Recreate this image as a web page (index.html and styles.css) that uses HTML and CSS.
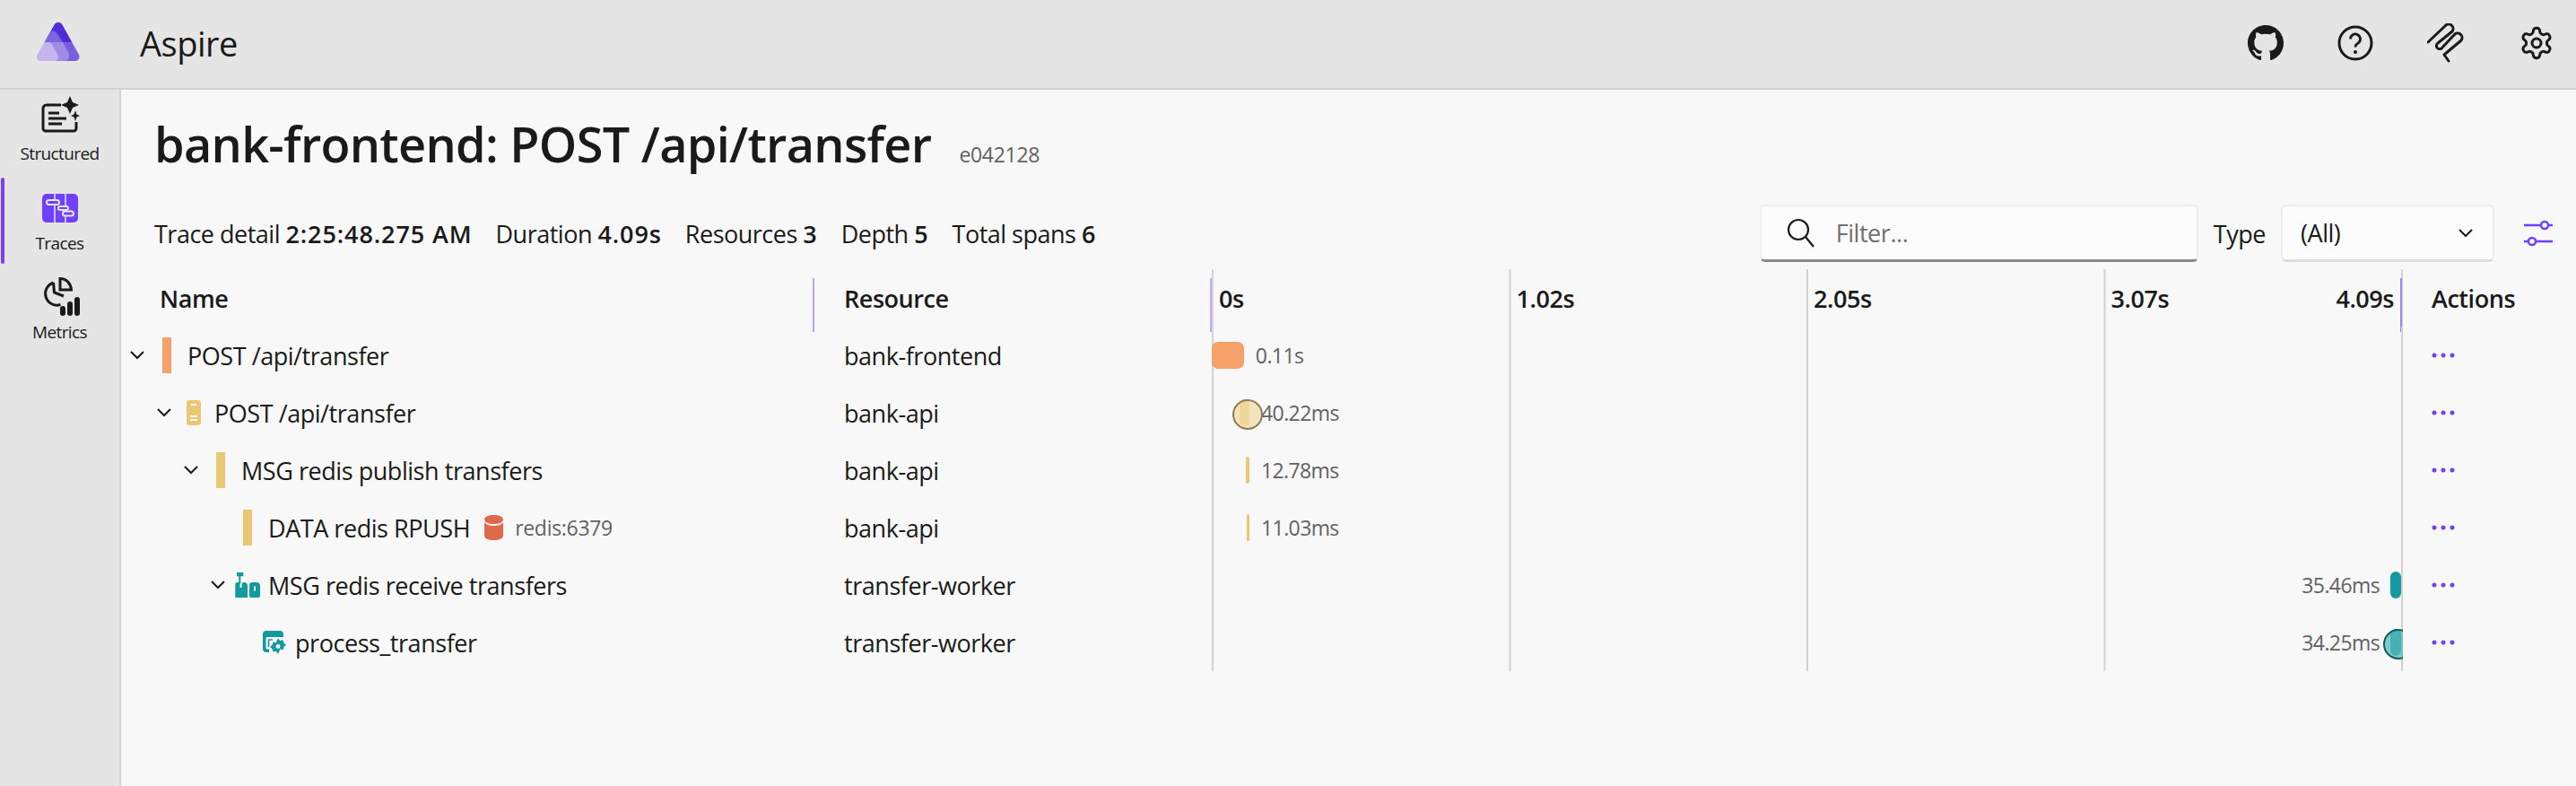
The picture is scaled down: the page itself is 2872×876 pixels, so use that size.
FILE: index.html
```html
<!DOCTYPE html>
<html lang="en">
<head>
    <meta charset="UTF-8">
    <title>Aspire</title>
    <link rel="stylesheet" href="styles.css">
</head>
<body>

    <div class="app">
        <!-- Top bar -->
        <header class="topbar">
            <div class="logo-cell">
                <svg class="logo" width="48" height="44" viewBox="0 0 48 44">
                    <path d="M24 0c2 0 3.5 1 4.6 3L47 36c1.5 3.300-.5 7-4 7H5c-3.500 0-5.500-3.700-4-7L19.400 3C20.500 1 22 0 24 0z" fill="#7a5fdc"/>
                    <path d="M24 0c2 0 3.5 1 4.600 3L39 22H9L19.400 3C20.500 1 22 0 24 0z" fill="#512bd4"/>
                    <path d="M15.500 10.500C17 9 20 9 22 11l7 11H9z" fill="#7f63e2"/>
                    <path d="M9 22h20l6.500 12c1.500 4-.5 9-4 9H10z" fill="#a08be8"/>
                    <path d="M11 22c-1 0-2 0-3 1L1 36c-1.500 3.300.5 7 4 7h15c3 0 5-4 3.500-7L17 25c-1.500-2.500-3.500-3-6-3z" fill="#c4b5f0"/>
                </svg>
            </div>
            <div class="app-name">Aspire</div>
            <div class="top-actions">
                <svg class="top-icon" width="40" height="40" viewBox="0 0 16 16" fill="#1a1a1a"><path d="M8 0C3.580 0 0 3.580 0 8c0 3.540 2.290 6.530 5.470 7.590.4.070.55-.17.55-.38 0-.19-.01-.82-.01-1.490-2.010.370-2.530-.490-2.690-.940-.090-.230-.480-.940-.820-1.130-.280-.150-.680-.520-.010-.530.630-.01 1.080.580 1.230.820.720 1.210 1.870.870 2.330.660.070-.520.280-.870.510-1.070-1.780-.2-3.640-.890-3.640-3.950 0-.870.310-1.590.820-2.150-.080-.2-.360-1.020.080-2.120 0 0 .670-.210 2.200.820.640-.180 1.320-.270 2-.270.680 0 1.360.090 2 .270 1.530-1.040 2.200-.820 2.200-.820.440 1.100.160 1.920.080 2.120.510.560.820 1.270.820 2.150 0 3.070-1.870 3.750-3.650 3.950.290.250.540.730.540 1.480 0 1.070-.010 1.930-.010 2.200 0 .210.150.460.550.380A8.013 8.013 0 0016 8c0-4.420-3.580-8-8-8z"/></svg>
                <svg class="top-icon" width="40" height="40" viewBox="0 0 40 40" fill="none" stroke="#1a1a1a" stroke-width="3"><circle cx="20" cy="20" r="18"/><path d="M14.500 15.500a5.500 5.500 0 1 1 8.500 4.600c-2 1.300-3 2.300-3 4.400" stroke-width="2.800"/><circle cx="20" cy="30" r="2" fill="#1a1a1a" stroke="none"/></svg>
                <svg class="top-icon" width="42" height="44" viewBox="0 0 42 44" fill="none" stroke="#1a1a1a" stroke-width="3" stroke-linecap="round" stroke-linejoin="round"><path d="M1 21L20 3a5 5 0 0 1 8 6L12 22a3 3 0 0 0 4 6L30 13a5 5 0 0 1 8 6L19 35l5 7"/></svg>
                <svg class="top-icon" width="40" height="40" viewBox="0 0 24 24" fill="none" stroke="#1a1a1a" stroke-width="1.800" stroke-linejoin="round"><path d="M12.220 2h-.44a2 2 0 0 0-2 2v.18a2 2 0 0 1-1 1.730l-.43.25a2 2 0 0 1-2 0l-.15-.08a2 2 0 0 0-2.730.73l-.22.38a2 2 0 0 0 .73 2.730l.15.1a2 2 0 0 1 1 1.720v.51a2 2 0 0 1-1 1.740l-.15.09a2 2 0 0 0-.73 2.730l.22.38a2 2 0 0 0 2.730.73l.15-.08a2 2 0 0 1 2 0l.43.25a2 2 0 0 1 1 1.730V20a2 2 0 0 0 2 2h.44a2 2 0 0 0 2-2v-.18a2 2 0 0 1 1-1.730l.43-.25a2 2 0 0 1 2 0l.15.08a2 2 0 0 0 2.730-.73l.22-.39a2 2 0 0 0-.73-2.730l-.15-.08a2 2 0 0 1-1-1.740v-.5a2 2 0 0 1 1-1.740l.15-.09a2 2 0 0 0 .73-2.730l-.22-.38a2 2 0 0 0-2.730-.73l-.15.08a2 2 0 0 1-2 0l-.43-.25a2 2 0 0 1-1-1.730V4a2 2 0 0 0-2-2z"/><circle cx="12" cy="12" r="3"/></svg>
            </div>
        </header>

        <!-- Side menu -->
        <nav class="side-nav">
            <a class="nav-item structured" href="#">
                <svg width="44" height="44" viewBox="0 0 44 44" fill="none"><path d="M23 11H7a4 4 0 0 0-4 4v22a3 3 0 0 0 3 3h31a3 3 0 0 0 3-3V30" stroke="#1a1a1a" stroke-width="3"/><path d="M9 20h12M9 26h20M9 32h15" stroke="#1a1a1a" stroke-width="3"/><path d="M33 1l3 7 7 3-7 3-3 7-3-7-7-3 7-3z" fill="#1a1a1a"/><path d="M39 17l1.500 4.500 3.500 1.500-3.500 1.500L39 29l-1.500-4.500L34 23l3.500-1.500z" fill="#1a1a1a"/></svg>
                <span>Structured</span>
            </a>
            <a class="nav-item active" href="#">
                <svg width="40" height="32" viewBox="0 0 40 32"><rect width="40" height="32" rx="5" fill="#7040ff"/><path d="M14 0v8M14 12v20M26 0v14M26 18v2M26 24v8" stroke="#e5e5e5" stroke-width="1.500"/><rect x="5" y="7" width="14" height="5" rx="2.500" fill="none" stroke="#e5e5e5" stroke-width="2"/><rect x="18" y="14" width="11" height="4" rx="2" fill="none" stroke="#e5e5e5" stroke-width="2"/><rect x="23" y="19.500" width="12" height="5" rx="2.500" fill="none" stroke="#e5e5e5" stroke-width="2"/></svg>
                <span>Traces</span>
            </a>
            <a class="nav-item metrics" href="#">
                <svg width="44" height="44" viewBox="0 0 44 44" fill="none" stroke="#1a1a1a" stroke-width="3"><path d="M14.500 6a12.500 12.500 0 0 0 8 24.500"/><path d="M14.500 6l1 11 10.500 4"/><path d="M22 1.500c7 0 12 5.500 12.500 12.500H22z"/><g fill="#1a1a1a" stroke="none"><rect x="22" y="32" width="6" height="11" rx="3"/><rect x="30" y="27" width="6" height="16" rx="3"/><rect x="38" y="22" width="6" height="21" rx="3"/></g></svg>
                <span>Metrics</span>
            </a>
        </nav>

        <!-- Trace detail -->
        <main class="content">
            <div class="page-title">
                <h1>bank-frontend: POST /api/transfer</h1>
                <span class="trace-id">e042128</span>
            </div>

            <div class="toolbar">
                <div class="trace-info">
                    <span>Trace detail <b>2:25:48.275 AM</b></span>
                    <span>Duration <b>4.09s</b></span>
                    <span>Resources <b>3</b></span>
                    <span>Depth <b>5</b></span>
                    <span>Total spans <b>6</b></span>
                </div>
                <div class="filters">
                    <div class="search-box">
                        <svg width="32" height="34" viewBox="0 0 32 34" fill="none" stroke="#1a1a1a" stroke-width="2.200"><circle cx="13" cy="13" r="11"/><path d="M21 21l9 11"/></svg>
                        <span>Filter...</span>
                    </div>
                    <label class="type-label">Type</label>
                    <div class="select-box">
                        <span>(All)</span>
                        <svg width="16" height="10" viewBox="0 0 16 10" fill="none" stroke="#1a1a1a" stroke-width="2"><path d="M1 1l7 7 7-7"/></svg>
                    </div>
                    <svg class="slider-icon" width="32" height="30" viewBox="0 0 32 30" fill="none" stroke="#7040ff" stroke-width="2.500"><path d="M0 6h20M26 6h6M0 24h6M12 24h20"/><circle cx="23" cy="6" r="4"/><circle cx="9" cy="24" r="4"/></svg>
                </div>
            </div>

            <div class="trace-table">
                <div class="row head">
                    <div class="name-col has-resizer">Name</div>
                    <div class="res-col">Resource</div>
                    <div class="time-col ticks">
                        <span class="tick">0s</span>
                        <span class="tick">1.02s</span>
                        <span class="tick">2.05s</span>
                        <span class="tick">3.07s</span>
                        <span class="tick last">4.09s</span>
                    </div>
                    <div class="act-col">Actions</div>
                </div>

                <div class="row">
                    <div class="name-col depth-0">
                        <svg class="chevron" width="16" height="10" viewBox="0 0 16 10"><path d="M1 1l7 7 7-7"/></svg>
                        <span class="slot"><i class="marker orange"></i></span>
                        <span class="span-name">POST /api/transfer</span>
                    </div>
                    <div class="res-col">bank-frontend</div>
                    <div class="time-col">
                        <div class="span-line">
                            <i class="bar orange" style="width:2.7%"></i>
                            <span class="span-time">0.11s</span>
                        </div>
                    </div>
                    <div class="act-col"><svg class="dots" width="26" height="6" viewBox="0 0 26 6"><circle cx="3" cy="3" r="2.500"/><circle cx="13" cy="3" r="2.500"/><circle cx="23" cy="3" r="2.500"/></svg></div>
                </div>

                <div class="row">
                    <div class="name-col depth-1">
                        <svg class="chevron" width="16" height="10" viewBox="0 0 16 10"><path d="M1 1l7 7 7-7"/></svg>
                        <span class="slot">
                            <svg width="16" height="28" viewBox="0 0 16 28"><rect width="16" height="28" rx="3" fill="#e9c874"/><path d="M5 5h6M4 18h8M4 22h8" stroke="#f8f8f8" stroke-width="2"/></svg>
                        </span>
                        <span class="span-name">POST /api/transfer</span>
                    </div>
                    <div class="res-col">bank-api</div>
                    <div class="time-col">
                        <div class="span-line" style="margin-left:2.34%">
                            <i class="bar yellow has-dot" style="width:11px"></i>
                            <span class="span-time">40.22ms</span>
                        </div>
                    </div>
                    <div class="act-col"><svg class="dots" width="26" height="6" viewBox="0 0 26 6"><circle cx="3" cy="3" r="2.500"/><circle cx="13" cy="3" r="2.500"/><circle cx="23" cy="3" r="2.500"/></svg></div>
                </div>

                <div class="row">
                    <div class="name-col depth-2">
                        <svg class="chevron" width="16" height="10" viewBox="0 0 16 10"><path d="M1 1l7 7 7-7"/></svg>
                        <span class="slot"><i class="marker yellow"></i></span>
                        <span class="span-name">MSG redis publish transfers</span>
                    </div>
                    <div class="res-col">bank-api</div>
                    <div class="time-col">
                        <div class="span-line" style="margin-left:2.86%">
                            <i class="bar yellow thin" style="width:4px"></i>
                            <span class="span-time">12.78ms</span>
                        </div>
                    </div>
                    <div class="act-col"><svg class="dots" width="26" height="6" viewBox="0 0 26 6"><circle cx="3" cy="3" r="2.500"/><circle cx="13" cy="3" r="2.500"/><circle cx="23" cy="3" r="2.500"/></svg></div>
                </div>

                <div class="row">
                    <div class="name-col depth-3">
                        <span class="chevron-gap"></span>
                        <span class="slot"><i class="marker yellow"></i></span>
                        <span class="span-name">DATA redis RPUSH</span>
                        <svg class="db-icon" width="21" height="28" viewBox="0 0 21 28" fill="#e0684b"><path d="M0 5c0-3 4.500-5 10.500-5S21 2 21 5s-4.500 5-10.500 5S0 8 0 5zM0 8c2 3 6 4 10.500 4S19 11 21 8v15c0 3-4.500 5-10.500 5S0 26 0 23z"/></svg>
                        <span class="peer">redis:6379</span>
                    </div>
                    <div class="res-col">bank-api</div>
                    <div class="time-col">
                        <div class="span-line" style="margin-left:2.94%">
                            <i class="bar yellow thin" style="width:3px"></i>
                            <span class="span-time">11.03ms</span>
                        </div>
                    </div>
                    <div class="act-col"><svg class="dots" width="26" height="6" viewBox="0 0 26 6"><circle cx="3" cy="3" r="2.500"/><circle cx="13" cy="3" r="2.500"/><circle cx="23" cy="3" r="2.500"/></svg></div>
                </div>

                <div class="row">
                    <div class="name-col depth-3">
                        <svg class="chevron" width="16" height="10" viewBox="0 0 16 10"><path d="M1 1l7 7 7-7"/></svg>
                        <span class="slot">
                            <svg width="28" height="28" viewBox="0 0 28 28" fill="#14999e"><path d="M2 0h7.300v4.300H6.300V11H7c-1 .8-1.500 2-1.500 3v3h2v-3c0-1.500.5-2.500 1.500-3h1c2.500 0 4 1.500 4 4v14H.3V14c0-2 .7-3 2-3h2V4.300H2z"/><path d="M16 15c0-2.500 1-4 3-4h5c2.500 0 4 1.500 4 4v11c0 1.300-.7 2-2 2h-8c-1.300 0-2-.7-2-2zm5 .5v5h2v-5z" fill-rule="evenodd"/></svg>
                        </span>
                        <span class="span-name">MSG redis receive transfers</span>
                    </div>
                    <div class="res-col">transfer-worker</div>
                    <div class="time-col">
                        <div class="span-line from-end">
                            <i class="bar teal" style="width:12px"></i>
                            <span class="span-time">35.46ms</span>
                        </div>
                    </div>
                    <div class="act-col"><svg class="dots" width="26" height="6" viewBox="0 0 26 6"><circle cx="3" cy="3" r="2.500"/><circle cx="13" cy="3" r="2.500"/><circle cx="23" cy="3" r="2.500"/></svg></div>
                </div>

                <div class="row">
                    <div class="name-col depth-4">
                        <span class="chevron-gap"></span>
                        <span class="slot">
                            <svg width="26" height="26" viewBox="0 0 26 26" fill="none"><path d="M4 0h15a4 4 0 0 1 4 4v3H5a1.500 1.500 0 0 0-1.500 1.500V19a1.500 1.500 0 0 0 1.500 1.500h2V24H4a4 4 0 0 1-4-4V4a4 4 0 0 1 4-4z" fill="#14999e"/><path d="M6 10h5M6.500 10v8" stroke="#14999e" stroke-width="1.600"/><path d="M17 8.500l2.300 2.500 3.200-.7 1 3.200 2.500 2.300-2.500 2.300-1 3.200-3.200-.7L17 26l-2.300-3.200-3.200.7-1-3.200L8 18l2.500-2.200 1-3.200 3.200.7z" fill="#14999e"/><circle cx="17" cy="17.500" r="2.400" fill="#f8f8f8"/></svg>
                        </span>
                        <span class="span-name">process_transfer</span>
                    </div>
                    <div class="res-col">transfer-worker</div>
                    <div class="time-col">
                        <div class="span-line from-end">
                            <i class="bar teal has-dot" style="width:12px"></i>
                            <span class="span-time">34.25ms</span>
                        </div>
                    </div>
                    <div class="act-col"><svg class="dots" width="26" height="6" viewBox="0 0 26 6"><circle cx="3" cy="3" r="2.500"/><circle cx="13" cy="3" r="2.500"/><circle cx="23" cy="3" r="2.500"/></svg></div>
                </div>
            </div>
        </main>
    </div>

</body>
</html>
```

FILE: styles.css
```css
* {
    margin: 0;
    padding: 0;
    box-sizing: border-box;
}

body {
    font-family: "Open Sans", "Noto Sans", sans-serif;
    font-size: 27px;
    letter-spacing: -0.45px;
    color: #1a1a1a;
    background: #e5e5e5;
}

.app {
    display: grid;
    grid-template-columns: 135px 1fr;
    grid-template-rows: 100px 1fr;
    height: 100vh;
}

/* Top bar */
.topbar {
    grid-column: 1 / 3;
    display: flex;
    align-items: center;
    border-bottom: 2px solid #d2d2d2;
}

.logo-cell {
    width: 156px;
    padding: 0 0 4px 41px;
}

.logo {
    display: block;
}

.app-name {
    font-size: 38px;
    letter-spacing: -0.5px;
    padding-bottom: 2px;
}

.top-actions {
    margin-left: auto;
    display: flex;
    align-items: center;
    gap: 60px;
    padding: 0 24px 2px 0;
}

/* Menu lateral */
.side-nav {
    border-right: 2px solid #d2d2d2;
}

.nav-item {
    position: relative;
    display: flex;
    flex-direction: column;
    align-items: center;
    color: #1a1a1a;
    text-decoration: none;
    font-size: 19px;
    letter-spacing: -0.6px;
}

.nav-item svg {
    flex: none;
}

.nav-item span {
    line-height: 26px;
}

.structured {
    height: 98px;
    padding-top: 6px;
    gap: 8px;
}

.active {
    height: 96px;
    padding-top: 18px;
    gap: 10px;
}

.metrics {
    height: 96px;
    margin-top: 4px;
    padding-top: 11px;
    gap: 4px;
}

.nav-item.active::before {
    content: "";
    position: absolute;
    left: 1px;
    top: 0;
    bottom: 0;
    width: 4px;
    border-radius: 2px;
    background: #7040ff;
}

/* Main */
.content {
    background: #f8f8f8;
}

.page-title {
    display: flex;
    align-items: baseline;
    gap: 31px;
    height: 60px;
    margin-top: 30px;
    padding-left: 37px;
}

.page-title h1 {
    font-size: 54px;
    line-height: 60px;
    font-weight: 600;
    letter-spacing: -0.7px;
}

.trace-id {
    font-size: 23px;
    color: #616161;
    letter-spacing: -0.3px;
}

.toolbar {
    display: flex;
    align-items: center;
    justify-content: space-between;
    height: 64px;
    margin-top: 38px;
    padding: 0 26px 0 37px;
}

.trace-info {
    display: flex;
    gap: 26px;
    letter-spacing: -0.5px;
}

.trace-info b {
    font-weight: 600;
    letter-spacing: 0.9px;
}

.filters {
    display: flex;
    align-items: center;
}

.search-box {
    width: 489px;
    height: 64px;
    display: flex;
    align-items: center;
    gap: 23px;
    padding-left: 28px;
    background: #fcfcfc;
    border: 2px solid #eee;
    border-bottom: 3px solid #8a8a8a;
    border-radius: 6px;
    color: #707070;
}

.type-label {
    margin: 0 17px;
}

.select-box {
    width: 238px;
    height: 64px;
    display: flex;
    align-items: center;
    justify-content: space-between;
    padding: 0 22px 0 20px;
    background: #fcfcfc;
    border: 2px solid #eee;
    border-bottom: 3px solid #dcdcdc;
    border-radius: 6px;
}

.slider-icon {
    margin-left: 33px;
}

/* Trace table */
.trace-table {
    margin-top: 8px;
}

.row {
    display: grid;
    grid-template-columns: 773px 443px 1328px 1fr;
    height: 64px;
}

.row > div {
    display: flex;
    align-items: center;
}

.head {
    font-weight: 600;
}

.head .name-col {
    padding-left: 43px;
}

.has-resizer {
    position: relative;
}

.has-resizer::after {
    content: "";
    position: absolute;
    right: 0;
    top: 10px;
    height: 60px;
    width: 2px;
    background: #b9a2f2;
}

.res-col {
    padding-left: 33px;
}

.time-col {
    position: relative;
    overflow: hidden;
    background-image: linear-gradient(to right, #d2d2d2 2px, transparent 2px);
    background-size: 331.5px 100%;
}

.act-col {
    padding-left: 32px;
}

.row .ticks {
    display: grid;
    grid-template-columns: repeat(4, 331.5px);
    overflow: visible;
}

.tick {
    padding-left: 8px;
}

.tick.last {
    position: absolute;
    right: 10px;
    padding: 0;
}

.ticks::before,
.ticks::after {
    content: "";
    position: absolute;
    top: 10px;
    height: 60px;
    width: 2px;
}

.ticks::before {
    left: -2px;
    background: #c4a8ff;
}

.ticks::after {
    right: 1px;
    background: #a184ea;
}

/* Tree column */
.depth-0 { padding-left: 3px; }
.depth-1 { padding-left: 33px; }
.depth-2 { padding-left: 63px; }
.depth-3 { padding-left: 93px; }
.depth-4 { padding-left: 123px; }

.chevron,
.chevron-gap {
    flex: none;
    width: 30px;
}

.chevron {
    fill: none;
    stroke: #1a1a1a;
    stroke-width: 2;
}

.slot {
    flex: none;
    width: 36px;
    margin-right: 5px;
    display: flex;
    justify-content: center;
}

.marker {
    display: block;
    width: 10px;
    height: 40px;
}

.orange { background: #f6a06a; }
.yellow { background: #e9c874; }
.teal { background: #14999e; }

.db-icon {
    margin-left: 16px;
}

.peer {
    margin-left: 13px;
    font-size: 23px;
    letter-spacing: -0.3px;
    color: #616161;
}

/* Spans */
.span-line {
    display: flex;
    align-items: center;
    width: 100%;
    gap: 13px;
}

.span-line.from-end {
    flex-direction: row-reverse;
    padding-right: 2px;
    gap: 12px;
}

.bar {
    position: relative;
    flex: none;
    display: block;
    height: 30px;
    border-radius: 7px;
}

.bar.thin {
    border-radius: 2px;
}

.bar.has-dot::after {
    content: "";
    position: absolute;
    top: 0;
    right: -15px;
    width: 30px;
    height: 30px;
    border-radius: 50%;
    border: 2px solid #8f7f55;
    background: rgba(240, 220, 170, 0.75);
}

.teal.has-dot::after {
    right: -14px;
    border-color: #0f5c60;
    background: rgba(90, 185, 188, 0.75);
}

.span-time {
    font-size: 23px;
    color: #616161;
    letter-spacing: -0.6px;
}

.dots {
    fill: #7040ff;
}
```
